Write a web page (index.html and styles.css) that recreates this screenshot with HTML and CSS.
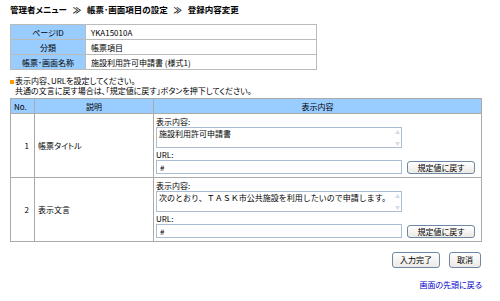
FILE: index.html
```html
<!DOCTYPE html>
<html lang="ja">
<head>
    <meta charset="UTF-8">
    <title>登録内容変更</title>
    <link rel="stylesheet" href="styles.css">
</head>
<body>
    <div class="page">
        <h1 class="crumbs">管理者メニュー &nbsp;&nbsp;≫&nbsp;&nbsp; 帳票･画面項目の設定 &nbsp;&nbsp;≫&nbsp;&nbsp; 登録内容変更</h1>

        <table class="info">
            <tr><th>ページID</th><td>YKA15010A</td></tr>
            <tr><th>分類</th><td>帳票項目</td></tr>
            <tr><th>帳票･画面名称</th><td>施設利用許可申請書 (様式1)</td></tr>
        </table>

        <div class="note">
            <p><span class="mark"></span>表示内容、URLを設定してください。</p>
            <p class="indent">共通の文言に戻す場合は、「規定値に戻す」ボタンを押下してください。</p>
        </div>

        <table class="items">
            <colgroup>
                <col class="c-no">
                <col class="c-desc">
                <col class="c-body">
            </colgroup>
            <tr class="head">
                <th class="no">No.</th>
                <th>説明</th>
                <th>表示内容</th>
            </tr>
            <tr>
                <td class="no">1</td>
                <td class="desc">帳票タイトル</td>
                <td class="body">
                    <div class="lbl">表示内容:</div>
                    <div class="area">
                        <textarea>施設利用許可申請書</textarea>
                        <span class="scroll"><i>▲</i><i>▼</i></span>
                    </div>
                    <div class="lbl url">URL:</div>
                    <div class="line">
                        <input type="text" value="#">
                        <button class="small">規定値に戻す</button>
                    </div>
                </td>
            </tr>
            <tr>
                <td class="no">2</td>
                <td class="desc">表示文言</td>
                <td class="body">
                    <div class="lbl">表示内容:</div>
                    <div class="area">
                        <textarea>次のとおり、ＴＡＳＫ市公共施設を利用したいので申請します。</textarea>
                        <span class="scroll"><i>▲</i><i>▼</i></span>
                    </div>
                    <div class="lbl url">URL:</div>
                    <div class="line">
                        <input type="text" value="#">
                        <button class="small">規定値に戻す</button>
                    </div>
                </td>
            </tr>
        </table>

        <div class="actions">
            <button class="big">入力完了</button>
            <button class="big">取消</button>
        </div>

        <div class="top-link"><a href="#">画面の先頭に戻る</a></div>
    </div>
</body>
</html>
```

FILE: styles.css
```css
body {
    margin: 0;
    padding: 0;
    background: #fff;
    color: #000;
    font-family: "Noto Sans CJK JP", sans-serif;
    font-size: 8px;
    font-feature-settings: "palt";
}

.page {
    width: 472px;
    padding: 4px 0 0 10px;
}

.crumbs {
    margin: 0;
    font-size: 8.5px;
    line-height: 10px;
    font-weight: bold;
}

.info {
    margin-top: 10px;
    width: 307px;
    border-collapse: collapse;
    border: 1px solid #999;
}

.info th, .info td {
    height: 14px;
    padding: 0 5px;
    border: 1px solid #bbb;
    line-height: 9px;
    font-weight: normal;
}

.info th {
    width: 64px;
    background: #99ccff;
    text-align: center;
}

.note {
    margin-top: 6px;
    line-height: 10px;
}

.note p {
    margin: 0;
}

.mark {
    display: inline-block;
    width: 4px;
    height: 4px;
    margin-right: 1px;
    background: #ff9900;
}

.indent {
    padding-left: 5px;
}

.items {
    margin-top: 2px;
    width: 472px;
    table-layout: fixed;
    border-collapse: collapse;
    border: 1px solid #999;
}

.c-no { width: 24px; }
.c-desc { width: 119px; }

.items th, .items td {
    border: 1px solid #aaa;
    line-height: 9px;
}

.items .head th {
    height: 14px;
    padding: 0;
    background: #99ccff;
    font-weight: normal;
    text-align: center;
}

.items .head th.no {
    text-align: left;
    padding-left: 3px;
}

.items td.no {
    text-align: right;
    padding-right: 5px;
    vertical-align: middle;
}

.items td.desc {
    padding-left: 3px;
    vertical-align: middle;
}

.items td.body {
    padding: 3px 2px 3px 2px;
    vertical-align: top;
}

.lbl {
    line-height: 9px;
}

.lbl.url {
    margin-top: 2px;
}

.area {
    display: flex;
    width: 246px;
    height: 21px;
    margin-top: 1px;
    box-sizing: border-box;
    border: 1px solid #a9bdd3;
    background: #fff;
}

.area textarea {
    flex: 1;
    border: none;
    padding: 1px 2px;
    margin: 0;
    resize: none;
    outline: none;
    font: 8px/9px "Noto Sans CJK JP", sans-serif;
    overflow: hidden;
}

.scroll {
    display: flex;
    flex-direction: column;
    justify-content: space-between;
    width: 7px;
    padding: 1px 0;
    color: #d4dce6;
    font-size: 5px;
    line-height: 6px;
    text-align: center;
}

.scroll i {
    font-style: normal;
}

.line {
    display: flex;
    align-items: center;
    gap: 5px;
    margin-top: 1px;
}

.line input {
    width: 246px;
    height: 14px;
    margin: 0;
    padding: 0 3px;
    box-sizing: border-box;
    border: 1px solid #a9bdd3;
    font: 8px "Noto Sans CJK JP", sans-serif;
}

button {
    margin: 0;
    padding: 0;
    border: 1px solid #6f87a6;
    border-radius: 3px;
    background: linear-gradient(#ffffff, #ebeae4);
    color: #000;
    font-family: "Noto Sans CJK JP", sans-serif;
    font-size: 8px;
    font-feature-settings: "palt";
    cursor: pointer;
}

button.small {
    width: 68px;
    height: 13px;
    line-height: 11px;
}

.actions {
    display: flex;
    justify-content: flex-end;
    gap: 9px;
    margin-top: 10px;
    padding-right: 1px;
}

button.big {
    height: 16px;
    padding: 0 7px;
    line-height: 14px;
}

.top-link {
    margin-top: 12px;
    text-align: right;
    line-height: 9px;
}

.top-link a {
    color: #0000cc;
}
```
